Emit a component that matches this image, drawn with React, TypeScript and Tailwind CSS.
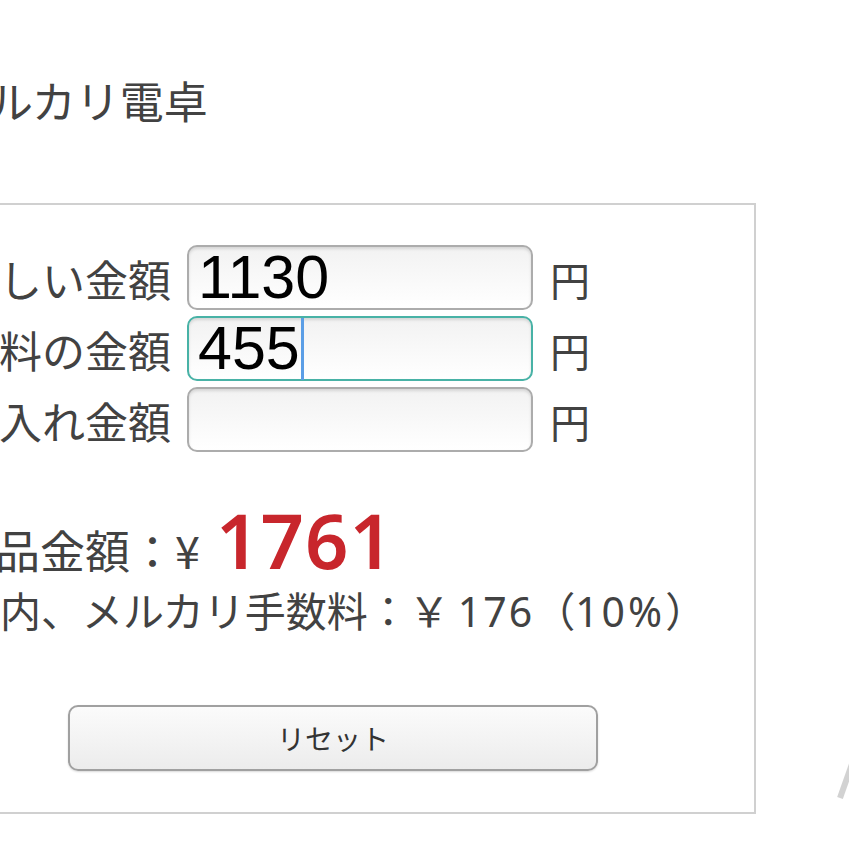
import React from 'react';

const jp = "font-['Noto_Sans_CJK_JP','Noto_Sans',sans-serif]";
const latin = "font-['Noto_Sans','Noto_Sans_CJK_JP',sans-serif]";
const num = "font-['Liberation_Sans',Arial,sans-serif]";

type Field = { label: string; value: string; focused?: boolean };

const fields: Field[] = [
  { label: '欲しい金額', value: '1130' },
  { label: '送料の金額', value: '455', focused: true },
  { label: '仕入れ金額', value: '' },
];

const FakeInput: React.FC<{ value: string; focused?: boolean }> = ({ value, focused }) => (
  <div
    className={`ml-[16px] flex h-[65px] w-[346px] items-center rounded-[10px] border-2 bg-gradient-to-b from-[#f2f2f2] to-white px-[9px] shadow-[inset_0_2px_3px_rgba(0,0,0,0.12)] ${
      focused ? 'border-[#48b2a6]' : 'border-[#acacac]'
    }`}
  >
    <span className={`${num} text-[61px] leading-none text-black`}>{value}</span>
    {focused && <span className="ml-[1px] inline-block h-[62px] w-[3px] bg-[#5b9ee6]" />}
  </div>
);

export default function App() {
  return (
    <div className={`relative h-[849px] w-[849px] overflow-hidden bg-white text-[#424242] ${jp}`}>
      <div className="ml-[-50px] pt-[78px]">
        {/* Title */}
        <h1 className="ml-[-5px] text-[44px] font-normal leading-none">メルカリ電卓</h1>

        {/* Calculator card */}
        <div className="ml-[-22px] mt-[81px] w-[828px] border-2 border-[#d0d0d0] pb-[41px] pl-[20px] pt-[40px]">
          <div className="flex flex-col gap-[6px]">
            {fields.map((f) => (
              <div key={f.label} className="flex items-center">
                <span className="w-[221px] whitespace-nowrap pt-[2px] text-right text-[43px] leading-none">
                  {f.label}
                </span>
                <FakeInput value={f.value} focused={f.focused} />
                <span className="ml-[17px] pt-[2px] text-[40px] leading-none">円</span>
              </div>
            ))}
          </div>

          {/* Result */}
          <div className="mt-[50px] flex items-baseline">
            <span className="text-[45px] leading-none">出品金額：¥</span>
            <span className={`${latin} ml-[16px] text-[76px] font-semibold leading-none tracking-[1px] text-[#c8262c]`}>
              1761
            </span>
          </div>
          <div className="ml-[-32px] mt-[11px] whitespace-nowrap text-[41px] leading-none">
            その内、メルカリ手数料：￥
            <span className={`${latin} ml-[8px] tracking-[2px]`}>176</span>（
            <span className={`${latin} tracking-[3px]`}>10%</span>）
          </div>

          <button className="ml-[118px] mt-[73px] flex h-[66px] w-[530px] items-center justify-center rounded-[10px] border-2 border-[#a0a0a0] bg-gradient-to-b from-[#fbfbfb] to-[#ececec] text-[28px] leading-none text-[#333] shadow-[0_1px_2px_rgba(0,0,0,0.15)]">
            リセット
          </button>
        </div>
      </div>

      {/* partial glyph at the bottom right edge */}
      <svg className="absolute left-[830px] top-[760px]" width="19" height="42" viewBox="0 0 19 42">
        <line x1="10" y1="38" x2="22" y2="4" stroke="#d2d2d2" strokeWidth="6" />
      </svg>
    </div>
  );
}
